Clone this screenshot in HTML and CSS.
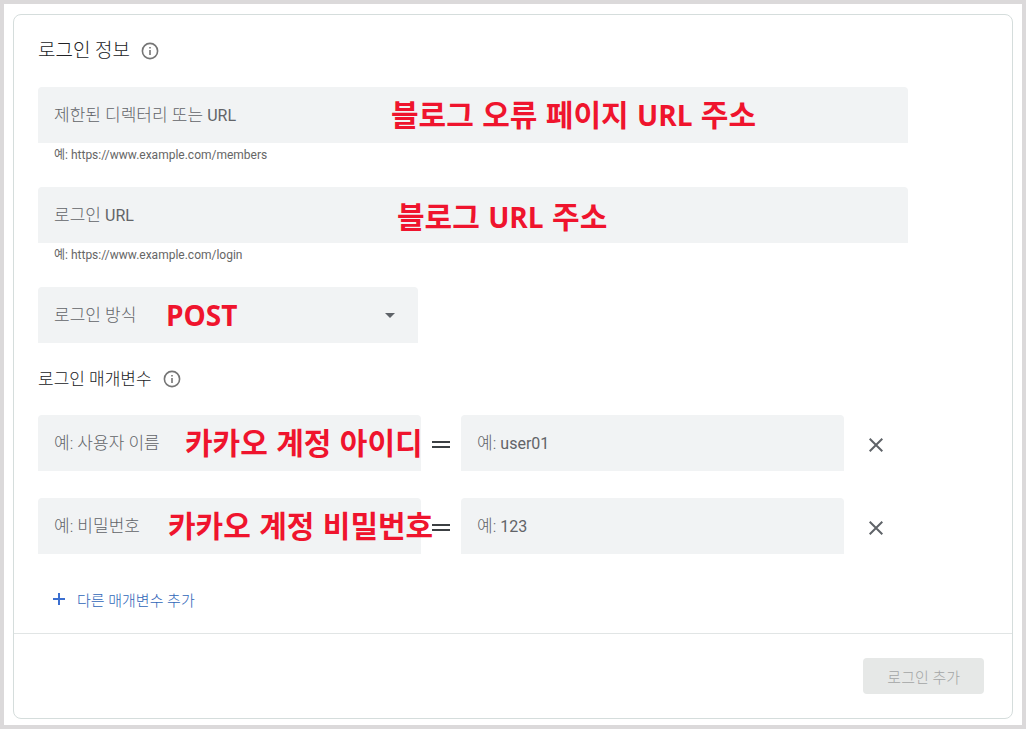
FILE: index.html
```html
<!DOCTYPE html>
<html lang="ko">
<head>
<meta charset="utf-8">
<meta name="viewport" content="width=device-width, initial-scale=1">
<title>로그인 정보</title>
<link rel="stylesheet" href="styles.css">
</head>
<body>
<main class="frame">
  <form class="card">
    <div class="content">
      <h1 class="heading">로그인 정보
        <svg class="info" viewBox="0 0 18 18" aria-hidden="true"><circle cx="9" cy="9" r="7.6"/><path d="M9 8v5M9 5v1.6"/></svg>
      </h1>

      <div class="group">
        <div class="field">
          <input class="control" id="dir" type="text">
          <label class="label" for="dir">제한된 디렉터리 또는 <span class="label-latin">URL</span></label>
          <span class="note note-dir">블로그 오류 페이지 <span class="latin">URL</span> 주소</span>
        </div>
        <p class="hint">예: https://www.example.com/members</p>
      </div>

      <div class="group">
        <div class="field">
          <input class="control" id="login-url" type="text">
          <label class="label" for="login-url">로그인 <span class="label-latin">URL</span></label>
          <span class="note note-url">블로그 <span class="latin">URL</span> 주소</span>
        </div>
        <p class="hint">예: https://www.example.com/login</p>
      </div>

      <div class="field field-select">
        <select class="control" id="method"><option value=""></option></select>
        <label class="label" for="method">로그인 방식</label>
        <svg class="arrow" viewBox="0 0 10 5" aria-hidden="true"><path d="M0 0h10L5 5z"/></svg>
        <span class="note note-method"><span class="latin">POST</span></span>
      </div>

      <h2 class="heading heading-small">로그인 매개변수
        <svg class="info" viewBox="0 0 18 18" aria-hidden="true"><circle cx="9" cy="9" r="7.6"/><path d="M9 8v5M9 5v1.6"/></svg>
      </h2>

      <div class="params">
        <div class="row">
          <div class="field">
            <input class="control" id="name1" type="text">
            <label class="label" for="name1">예: 사용자 이름</label>
            <span class="note note-id">카카오 계정 아이디</span>
          </div>
          <svg class="equals" viewBox="0 0 18 7" aria-hidden="true"><path d="M0 1h18M0 6h18"/></svg>
          <div class="field">
            <input class="control" id="value1" type="text">
            <label class="label" for="value1">예: <span class="label-latin">user01</span></label>
          </div>
          <button class="remove" type="button" aria-label="삭제">
            <svg viewBox="0 0 14 14" aria-hidden="true"><path d="M.7.7l12.6 12.6M13.3.7L.7 13.3"/></svg>
          </button>
        </div>
        <div class="row">
          <div class="field">
            <input class="control" id="name2" type="text">
            <label class="label" for="name2">예: 비밀번호</label>
            <span class="note note-password">카카오 계정 비밀번호</span>
          </div>
          <svg class="equals" viewBox="0 0 18 7" aria-hidden="true"><path d="M0 1h18M0 6h18"/></svg>
          <div class="field">
            <input class="control" id="value2" type="text">
            <label class="label" for="value2">예: <span class="label-latin">123</span></label>
          </div>
          <button class="remove" type="button" aria-label="삭제">
            <svg viewBox="0 0 14 14" aria-hidden="true"><path d="M.7.7l12.6 12.6M13.3.7L.7 13.3"/></svg>
          </button>
        </div>
      </div>

      <button class="add" type="button">
        <svg viewBox="0 0 12 12" aria-hidden="true"><path d="M0 6h12M6 0v12"/></svg>
        다른 매개변수 추가
      </button>
    </div>
    <footer class="footer">
      <button class="submit" type="submit" disabled>로그인 추가</button>
    </footer>
  </form>
</main>
</body>
</html>
```

FILE: styles.css
```css
* {
  box-sizing: border-box;
}

body {
  margin: 0;
  background: #fff;
  color: #202124;
  font-family: Roboto, "Noto Sans CJK KR", sans-serif;
  font-weight: 300;
}

.frame {
  min-height: 100vh;
  padding: 10px 9px 6px;
  border: 4px solid #dbd9da;
}

.card {
  border: 1px solid #d5dddc;
  border-radius: 8px;
}

.content {
  padding: 22px 24px 16px;
}

.heading {
  display: flex;
  align-items: center;
  gap: 11px;
  margin: 0 0 22px;
  font-size: 19px;
  font-weight: 300;
  line-height: 28px;
}

.heading-small {
  margin-top: 22px;
  font-size: 17px;
}

.info {
  width: 18px;
  height: 18px;
  fill: none;
  stroke: #757575;
  stroke-width: 1.6;
}

.group {
  margin-bottom: 20px;
}

.field {
  position: relative;
  display: grid;
  align-items: center;
  max-width: 870px;
}

.field > .control,
.field > .label,
.field > .arrow {
  grid-area: 1 / 1;
}

.field-select {
  max-width: 380px;
}

.control {
  width: 100%;
  height: 56px;
  padding: 0 16px;
  border: 0;
  border-radius: 4px 4px 0 0;
  background: #f1f3f4;
  color: #202124;
  font: inherit;
  font-size: 17px;
  appearance: none;
}

.label {
  padding-left: 16px;
  color: #626468;
  font-size: 17px;
  line-height: 24px;
  pointer-events: none;
}

.label-latin {
  font-size: 16px;
  font-weight: 400;
}

.arrow {
  justify-self: end;
  width: 10px;
  height: 5px;
  margin-right: 23px;
  fill: #5f6368;
  pointer-events: none;
}

.hint {
  margin: 0;
  padding-left: 16px;
  color: #666;
  font-size: 12px;
  font-weight: 400;
  line-height: 24px;
}

/* Guidance laid over the form fields */
.note {
  position: absolute;
  top: 6px;
  z-index: 1;
  color: #ef142d;
  font-family: "Noto Sans CJK KR", sans-serif;
  font-size: 30px;
  font-weight: 700;
  line-height: 40px;
  white-space: nowrap;
  pointer-events: none;
}

.latin {
  font-family: "Open Sans", sans-serif;
  font-size: 28px;
}

.note-dir {
  left: 353px;
}

.note-url {
  top: 8px;
  left: 359px;
}

.note-method {
  left: 128px;
}

.note-id {
  left: 147px;
}

.note-password {
  left: 130px;
}

.params {
  display: grid;
  gap: 27px;
  max-width: 870px;
}

.row {
  display: grid;
  grid-template-columns: 1fr 40px 1fr 64px;
  align-items: center;
}

.equals {
  justify-self: center;
  width: 18px;
  height: 7px;
  margin-top: 3px;
  stroke: #3c4043;
  stroke-width: 2;
}

.remove {
  display: grid;
  place-items: center;
  justify-self: center;
  width: 40px;
  height: 40px;
  margin-top: 4px;
  padding: 0;
  border: 0;
  background: none;
}

.remove svg {
  width: 14px;
  height: 14px;
  stroke: #5f6368;
  stroke-width: 2;
}

.add {
  display: flex;
  align-items: center;
  gap: 12px;
  height: 36px;
  margin-top: 27px;
  padding: 0 15px;
  border: 0;
  background: none;
  color: #2f66b8;
  font: inherit;
  font-size: 15px;
}

.add svg {
  width: 12px;
  height: 12px;
  stroke: #3b6fd0;
  stroke-width: 2;
}

.footer {
  display: flex;
  justify-content: flex-end;
  padding: 24px 28px;
  border-top: 1px solid #e1e5e5;
}

.submit {
  height: 36px;
  padding: 0 24px;
  border: 0;
  border-radius: 4px;
  background: #e6e8e7;
  color: #a3a5a5;
  font: inherit;
  font-size: 15px;
}
```
